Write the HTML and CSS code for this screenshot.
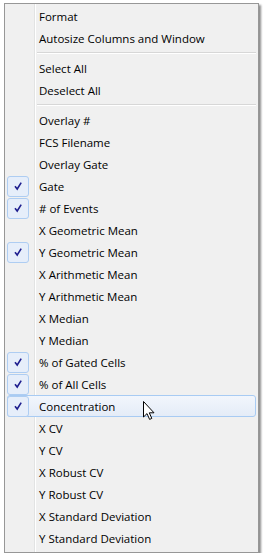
FILE: index.html
```html
<!DOCTYPE html>
<html>
  <head>
    <title>Context Menu</title>
    <link rel="stylesheet" href="styles.css">
  </head>
  <body>
    <div class="menu">
      <div class="item"><span class="check"></span><span class="label">Format</span></div>
      <div class="item"><span class="check"></span><span class="label">Autosize Columns and Window</span></div>
      <div class="sep"></div>
      <div class="item"><span class="check"></span><span class="label">Select All</span></div>
      <div class="item"><span class="check"></span><span class="label">Deselect All</span></div>
      <div class="sep"></div>
      <div class="item"><span class="check"></span><span class="label">Overlay #</span></div>
      <div class="item"><span class="check"></span><span class="label">FCS Filename</span></div>
      <div class="item"><span class="check"></span><span class="label">Overlay Gate</span></div>
      <div class="item checked"><span class="check"><svg viewBox="0 0 10 10"><path d="M2 5.2 L4.2 8 L8.2 1.6"/></svg></span><span class="label">Gate</span></div>
      <div class="item checked"><span class="check"><svg viewBox="0 0 10 10"><path d="M2 5.2 L4.2 8 L8.2 1.6"/></svg></span><span class="label"># of Events</span></div>
      <div class="item"><span class="check"></span><span class="label">X Geometric Mean</span></div>
      <div class="item checked"><span class="check"><svg viewBox="0 0 10 10"><path d="M2 5.2 L4.2 8 L8.2 1.6"/></svg></span><span class="label">Y Geometric Mean</span></div>
      <div class="item"><span class="check"></span><span class="label">X Arithmetic Mean</span></div>
      <div class="item"><span class="check"></span><span class="label">Y Arithmetic Mean</span></div>
      <div class="item"><span class="check"></span><span class="label">X Median</span></div>
      <div class="item"><span class="check"></span><span class="label">Y Median</span></div>
      <div class="item checked"><span class="check"><svg viewBox="0 0 10 10"><path d="M2 5.2 L4.2 8 L8.2 1.6"/></svg></span><span class="label">% of Gated Cells</span></div>
      <div class="item checked"><span class="check"><svg viewBox="0 0 10 10"><path d="M2 5.2 L4.2 8 L8.2 1.6"/></svg></span><span class="label">% of All Cells</span></div>
      <div class="item checked hover"><span class="check"><svg viewBox="0 0 10 10"><path d="M2 5.2 L4.2 8 L8.2 1.6"/></svg></span><span class="label">Concentration</span>
        <svg class="cursor" viewBox="0 0 12 19"><path d="M0.5 0.5 L0.5 16 L4 12.6 L6.6 18.4 L8.8 17.4 L6.3 11.8 L11 11.8 Z"/></svg>
      </div>
      <div class="item"><span class="check"></span><span class="label">X CV</span></div>
      <div class="item"><span class="check"></span><span class="label">Y CV</span></div>
      <div class="item"><span class="check"></span><span class="label">X Robust CV</span></div>
      <div class="item"><span class="check"></span><span class="label">Y Robust CV</span></div>
      <div class="item"><span class="check"></span><span class="label">X Standard Deviation</span></div>
      <div class="item"><span class="check"></span><span class="label">Y Standard Deviation</span></div>
    </div>
  </body>
</html>
```

FILE: styles.css
```css
* {
  box-sizing: border-box;
}

body {
  margin: 0;
  padding: 0;
  background-color: #fff;
  font-family: "Open Sans", Arial, sans-serif;
  font-size: 11.5px;
  color: #000;
}

.menu {
  width: 255px;
  height: 550px;
  margin: 3px 0 0 4px;
  padding: 1px 2px 2px;
  border: 1px solid #979797;
  background-color: #f0f0f0;
  background-image: linear-gradient(to right, transparent 29px, #e2e3e3 29px, #e2e3e3 30px, #fff 30px, #fff 31px, transparent 31px);
  box-shadow: 2px 2px 2px rgba(0, 0, 0, 0.45);
}

.item {
  position: relative;
  display: flex;
  align-items: center;
  height: 22px;
  border: 1px solid transparent;
  border-radius: 3px;
}

.check {
  width: 22px;
  height: 21px;
  margin-left: -1px;
  border: 1px solid transparent;
  border-radius: 3px;
  display: flex;
  align-items: center;
  justify-content: center;
}

.checked .check {
  border-color: #aecdf2;
  background-color: #e6eefa;
}

.check svg {
  width: 10px;
  height: 10px;
  fill: none;
  stroke: #1f1f8f;
  stroke-width: 1.6;
}

.label {
  margin-left: 10px;
  white-space: nowrap;
}

.hover {
  border-color: #a8cbf3;
  background: linear-gradient(#f2f6fc, #e4ecf7);
}

.sep {
  height: 8px;
  margin-left: 30px;
  background-image: linear-gradient(transparent 3px, #d7d7d7 3px, #d7d7d7 4px, #fff 4px, #fff 5px, transparent 5px);
}

.cursor {
  position: absolute;
  left: 135px;
  top: 5px;
  width: 12px;
  height: 19px;
  fill: #fff;
  stroke: #000;
  stroke-width: 1;
}
```
